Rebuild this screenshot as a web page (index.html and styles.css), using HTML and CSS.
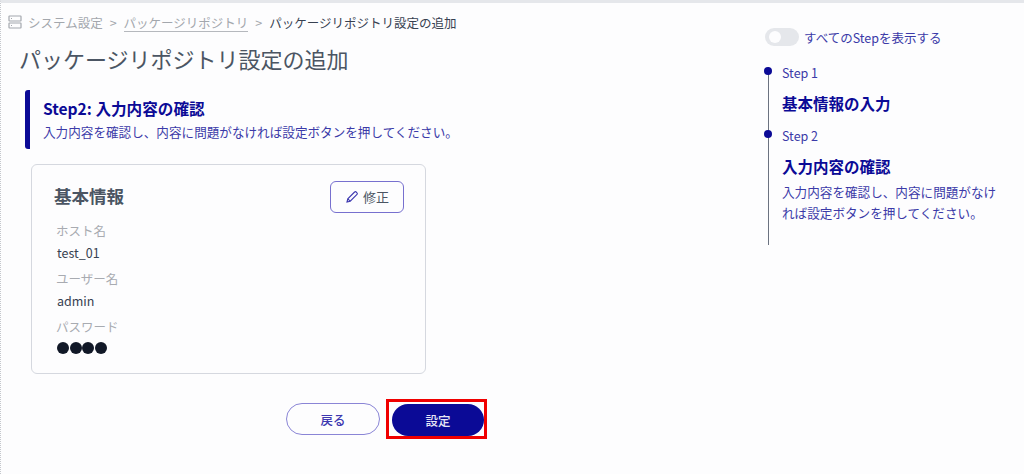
FILE: index.html
```html
<!DOCTYPE html>
<html lang="ja">
  <head>
    <meta charset="UTF-8" />
    <title>パッケージリポジトリ設定の追加</title>
    <link rel="stylesheet" href="styles.css">
  </head>
  <body>
    <div class="layout">
      <main class="content">
        <nav class="breadcrumb">
          <svg class="crumb-icon" viewBox="0 0 14 14" width="14" height="14">
            <rect x="1" y="1" width="12" height="5" rx="0.5" />
            <rect x="1" y="8" width="12" height="5" rx="0.5" />
            <path d="M3 3.5h1M3 10.5h1" />
          </svg>
          <span class="crumb">システム設定</span>
          <span class="crumb-sep">&gt;</span>
          <a class="crumb crumb-link">パッケージリポジトリ</a>
          <span class="crumb-sep">&gt;</span>
          <span class="crumb-current">パッケージリポジトリ設定の追加</span>
        </nav>

        <h1 class="page-title">パッケージリポジトリ設定の追加</h1>

        <div class="step-head">
          <h2>Step2: 入力内容の確認</h2>
          <p>入力内容を確認し、内容に問題がなければ設定ボタンを押してください。</p>
        </div>

        <section class="card">
          <div class="card-head">
            <h3>基本情報</h3>
            <button class="edit-btn">
              <svg viewBox="0 0 14 14" width="14" height="14">
                <path d="M2 12l.8-3.2L9.6 2a1.1 1.1 0 0 1 1.6 0l.8.8a1.1 1.1 0 0 1 0 1.6L5.2 11.2z" />
                <path d="M2.8 8.8l2.4 2.4" />
              </svg>
              修正
            </button>
          </div>
          <dl class="fields">
            <dt>ホスト名</dt>
            <dd>test_01</dd>
            <dt>ユーザー名</dt>
            <dd>admin</dd>
            <dt>パスワード</dt>
            <dd class="dots"><i></i><i></i><i></i><i></i></dd>
          </dl>
        </section>

        <div class="actions">
          <button class="btn btn-back">戻る</button>
          <div class="highlight">
            <button class="btn btn-submit">設定</button>
          </div>
        </div>
      </main>

      <aside class="steps">
        <div class="toggle-row">
          <span class="toggle"><span class="knob"></span></span>
          <span>すべてのStepを表示する</span>
        </div>
        <ol class="timeline">
          <li>
            <div class="step-no">Step 1</div>
            <div class="step-name">基本情報の入力</div>
          </li>
          <li>
            <div class="step-no">Step 2</div>
            <div class="step-name">入力内容の確認</div>
            <p>入力内容を確認し、内容に問題がなければ設定ボタンを押してください。</p>
          </li>
        </ol>
      </aside>
    </div>
  </body>
</html>
```

FILE: styles.css
```css
* {
  margin: 0;
  padding: 0;
  box-sizing: border-box;
}

html,
body {
  height: 474px;
  overflow: hidden;
}

body {
  font-family: "Noto Sans CJK JP", "Noto Sans", sans-serif;
  background: #fdfdfe;
  color: #1f2937;
  border-top: 3px solid #e5e7eb;
  border-left: 1px dotted #c4c7cc;
}

.layout {
  display: flex;
}

.content {
  width: 763px;
  padding: 9px 0 0 7px;
}

.breadcrumb {
  display: flex;
  align-items: center;
  height: 20px;
  font-size: 12.5px;
  color: #a3a7ad;
}

.crumb-icon {
  margin-right: 6px;
  fill: none;
  stroke: #a3a7ad;
  stroke-width: 1.2;
}

.crumb-link {
  border-bottom: 1px solid #b5b8bd;
  line-height: 17px;
  margin-top: 1px;
}

.crumb-sep {
  margin: 0 7px;
}

.crumb-current {
  color: #374151;
}

.page-title {
  font-size: 22px;
  font-weight: 400;
  line-height: 32px;
  color: #4b5563;
  margin: 10px 0 0 11px;
}

.step-head {
  margin: 16px 0 0 17px;
  height: 59px;
  padding: 7px 0 0 13px;
  border-left: 5px solid #0b0a96;
  border-radius: 3px;
  color: #0b0a96;
}

.step-head h2 {
  font-size: 15.6px;
  font-weight: 700;
  line-height: 22px;
}

.step-head p {
  font-size: 12.6px;
  line-height: 20px;
  margin-top: 3px;
  color: #3b3aa8;
}

.card {
  width: 395px;
  height: 210px;
  margin: 15px 0 0 23px;
  padding: 15px 21px 0 22px;
  background: #fdfdfe;
  border: 1px solid #d5d8df;
  border-radius: 6px;
}

.card-head {
  display: flex;
  justify-content: space-between;
  align-items: center;
  height: 33px;
}

.card-head h3 {
  font-size: 17.5px;
  font-weight: 700;
  color: #4b5563;
  margin-top: -2px;
}

.edit-btn {
  display: flex;
  align-items: center;
  justify-content: center;
  gap: 4px;
  width: 74px;
  height: 32px;
  font: inherit;
  font-size: 13px;
  color: #4b5563;
  background: #fdfdfe;
  border: 1px solid #7770cf;
  border-radius: 6px;
}

.edit-btn svg {
  fill: none;
  stroke: #3d38b0;
  stroke-width: 1.1;
}

.fields {
  margin: 9px 0 0 2px;
}

.fields dt {
  font-size: 12.5px;
  line-height: 18px;
  color: #a8abb1;
}

.fields dd {
  font-size: 12.5px;
  line-height: 20px;
  margin: 3px 0 7px 1px;
  color: #374151;
}

.fields .dots {
  display: flex;
  gap: 0.5px;
  align-items: center;
  height: 14px;
  margin-top: 5px;
}

.dots i {
  width: 12px;
  height: 12px;
  border-radius: 50%;
  background: #111827;
}

.actions {
  display: flex;
  align-items: center;
  margin: 25px 0 0 278px;
  height: 40px;
  gap: 6px;
}

.btn {
  height: 32px;
  font: inherit;
  font-size: 12.5px;
  font-weight: 500;
  border-radius: 16px;
}

.btn-back {
  width: 94px;
  color: #3d38b0;
  background: #fdfdfe;
  border: 1px solid #8a85d6;
}

.highlight {
  border: 3px solid #f00000;
  padding: 2px 0 2px 3px;
  display: flex;
  width: 101px;
  height: 40px;
}

.btn-submit {
  width: 92px;
  color: #e6e6f5;
  background: #0b0a96;
  border: none;
}

.steps {
  width: 240px;
  padding: 24px 0 0 1px;
  color: #3b3aa8;
}

.toggle-row {
  display: flex;
  align-items: center;
  gap: 5px;
  font-size: 12.5px;
  height: 20px;
}

.toggle {
  display: block;
  width: 34px;
  height: 18px;
  padding: 3px 0 0 4px;
  border-radius: 9px;
  background: #e5e7eb;
}

.knob {
  display: block;
  width: 12px;
  height: 12px;
  border-radius: 50%;
  background: #fdfdfe;
}

.timeline {
  list-style: none;
  margin: 20px 0 0 3px;
  width: 232px;
}

.timeline li {
  display: flow-root;
  position: relative;
  padding-left: 13px;
  border-left: 1px solid #6b7280;
  height: 63px;
}

.timeline li:last-child {
  height: 115px;
}

.timeline li::before {
  content: "";
  position: absolute;
  left: -5px;
  top: 0;
  width: 8px;
  height: 8px;
  border-radius: 50%;
  background: #0b0a96;
}

.step-no {
  font-size: 12.5px;
  line-height: 16px;
  margin-top: -2px;
}

.step-name {
  font-size: 15.5px;
  font-weight: 700;
  line-height: 20px;
  margin-top: 12px;
  color: #0b0a96;
}

.timeline p {
  font-size: 12.6px;
  line-height: 21px;
  margin-top: 5px;
}
```
